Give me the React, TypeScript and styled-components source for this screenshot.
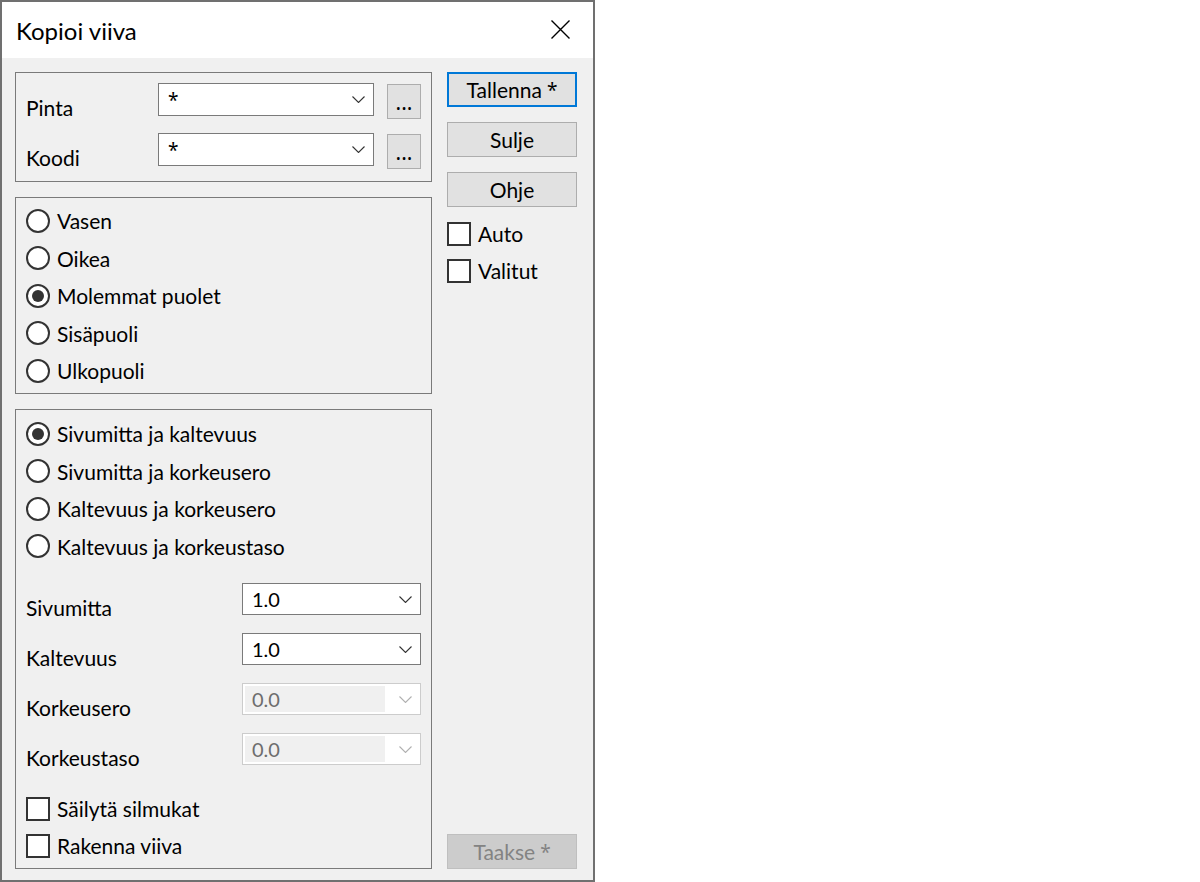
import React from "react";
import styled, { createGlobalStyle } from "styled-components";

const GlobalStyle = createGlobalStyle`
  html, body {
    margin: 0;
    padding: 0;
    background: #ffffff;
  }
  body {
    font-family: Lato, "Noto Sans", "Liberation Sans", sans-serif;
    color: #000000;
  }
  * {
    box-sizing: border-box;
  }
`;

const Window = styled.div`
  width: 595px;
  height: 882px;
  border: 2px solid #707070;
  display: flex;
  flex-direction: column;
  background: #f0f0f0;
`;

const TitleBar = styled.div`
  height: 56px;
  flex: 0 0 56px;
  background: #ffffff;
  display: flex;
  align-items: center;
  justify-content: space-between;
  padding: 0 23px 0 14px;
  font-size: 24px;
`;

const CloseButton = styled.div`
  display: flex;
  margin-top: -2px;
`;

const Body = styled.div`
  flex: 1;
  display: flex;
  gap: 15px;
  padding: 14px 16px 11px 13px;
`;

const LeftColumn = styled.div`
  width: 417px;
  display: flex;
  flex-direction: column;
  gap: 15px;
`;

const RightColumn = styled.div`
  width: 130px;
  display: flex;
  flex-direction: column;
`;

const GroupBox = styled.div<{ $height?: number }>`
  border: 1px solid #7a7a7a;
  ${(p) => (p.$height ? `height: ${p.$height}px;` : "flex: 1;")}
`;

const SourceGrid = styled.div`
  display: grid;
  grid-template-columns: 132px 216px 47px;
  grid-auto-rows: 33px;
  row-gap: 17px;
  padding: 10px 10px 0 10px;
`;

const SideList = styled.div`
  padding: 4px 10px 0 10px;
`;

const ModeGroup = styled.div`
  height: 100%;
  display: flex;
  flex-direction: column;
  padding: 5px 10px 4px 10px;
`;

const FieldGrid = styled.div`
  display: grid;
  grid-template-columns: 216px 179px;
  grid-auto-rows: 32px;
  row-gap: 18px;
  margin-top: 18px;
`;

const CheckList = styled.div`
  margin-top: auto;
`;

const Label = styled.div`
  font-size: 21px;
  line-height: 24px;
  padding-top: 13px;
  white-space: nowrap;
`;

const Combo = styled.div<{ $disabled?: boolean }>`
  height: 33px;
  border: 1px solid ${(p) => (p.$disabled ? "#cccccc" : "#7a7a7a")};
  background: #ffffff;
  display: flex;
  align-items: center;
  padding: 2px 8px 2px 2px;
`;

const SmallCombo = styled(Combo)`
  height: 32px;
`;

const ComboText = styled.div<{ $disabled?: boolean }>`
  flex: 1;
  height: 100%;
  margin-right: 14px;
  padding-left: 7px;
  font-size: 20px;
  line-height: 27px;
  background: ${(p) => (p.$disabled ? "#f0f0f0" : "transparent")};
  color: ${(p) => (p.$disabled ? "#6d6d6d" : "#000000")};
`;

const Star = styled.span`
  font-family: "Noto Sans", sans-serif;
  font-size: 19px;
`;

const BrowseButton = styled.div`
  height: 35px;
  margin-top: 1px;
  margin-left: 13px;
  padding-top: 2px;
  background: #e1e1e1;
  border: 1px solid #adadad;
  display: flex;
  justify-content: center;
  font-family: "Noto Sans", sans-serif;
  font-size: 21px;
  line-height: 30px;
`;

const RadioRow = styled.div`
  height: 37.5px;
  display: flex;
  align-items: center;
  gap: 7px;
  font-size: 21px;
  white-space: nowrap;
`;

const RadioCircle = styled.span<{ $checked?: boolean }>`
  width: 24px;
  height: 24px;
  flex: 0 0 24px;
  border: 2px solid #333333;
  border-radius: 50%;
  background: #ffffff;
  display: flex;
  align-items: center;
  justify-content: center;

  &::after {
    content: "";
    width: 12px;
    height: 12px;
    border-radius: 50%;
    background: ${(p) => (p.$checked ? "#333333" : "transparent")};
  }
`;

const CheckRow = styled.div`
  height: 37px;
  display: flex;
  align-items: center;
  gap: 7px;
  font-size: 21px;
  white-space: nowrap;
`;

const CheckBox = styled.span`
  width: 24px;
  height: 24px;
  flex: 0 0 24px;
  border: 2px solid #333333;
  background: #ffffff;
`;

const ButtonStack = styled.div`
  display: flex;
  flex-direction: column;
  gap: 15px;
`;

const SideChecks = styled.div`
  margin-top: 8px;
`;

const Button = styled.div<{ $variant?: "default" | "normal" | "disabled" }>`
  height: 35px;
  display: flex;
  align-items: center;
  justify-content: center;
  gap: 5px;
  font-size: 21px;
  background: ${(p) => (p.$variant === "disabled" ? "#cccccc" : "#e1e1e1")};
  color: ${(p) => (p.$variant === "disabled" ? "#838383" : "#000000")};
  border: ${(p) =>
    p.$variant === "default"
      ? "2px solid #0078d7"
      : p.$variant === "disabled"
      ? "1px solid #bfbfbf"
      : "1px solid #adadad"};
`;

const BottomButton = styled(Button)`
  margin-top: auto;
`;

const Chevron = ({ disabled }: { disabled?: boolean }) => (
  <svg width="13" height="7" viewBox="0 0 13 7">
    <polyline
      points="0.5,0.5 6.5,6.5 12.5,0.5"
      fill="none"
      stroke={disabled ? "#b0b0b0" : "#333333"}
      strokeWidth="1.1"
    />
  </svg>
);

const sides = ["Vasen", "Oikea", "Molemmat puolet", "Sisäpuoli", "Ulkopuoli"];
const modes = [
  "Sivumitta ja kaltevuus",
  "Sivumitta ja korkeusero",
  "Kaltevuus ja korkeusero",
  "Kaltevuus ja korkeustaso",
];
const fields = [
  { label: "Sivumitta", value: "1.0", disabled: false },
  { label: "Kaltevuus", value: "1.0", disabled: false },
  { label: "Korkeusero", value: "0.0", disabled: true },
  { label: "Korkeustaso", value: "0.0", disabled: true },
];

const App: React.FC = () => {
  return (
    <>
      <GlobalStyle />
      <Window>
        <TitleBar>
          <span>Kopioi viiva</span>
          <CloseButton>
            <svg width="19" height="19" viewBox="0 0 19 19">
              <path d="M0.5 0.5 L18.5 18.5 M18.5 0.5 L0.5 18.5" stroke="#000" strokeWidth="1.4" />
            </svg>
          </CloseButton>
        </TitleBar>
        <Body>
          <LeftColumn>
            <GroupBox $height={110}>
              <SourceGrid>
                {["Pinta", "Koodi"].map((name) => (
                  <React.Fragment key={name}>
                    <Label>{name}</Label>
                    <Combo>
                      <ComboText>
                        <Star>*</Star>
                      </ComboText>
                      <Chevron />
                    </Combo>
                    <BrowseButton>...</BrowseButton>
                  </React.Fragment>
                ))}
              </SourceGrid>
            </GroupBox>
            <GroupBox $height={197}>
              <SideList>
                {sides.map((side, i) => (
                  <RadioRow key={side}>
                    <RadioCircle $checked={i === 2} />
                    {side}
                  </RadioRow>
                ))}
              </SideList>
            </GroupBox>
            <GroupBox>
              <ModeGroup>
                {modes.map((mode, i) => (
                  <RadioRow key={mode}>
                    <RadioCircle $checked={i === 0} />
                    {mode}
                  </RadioRow>
                ))}
                <FieldGrid>
                  {fields.map((f) => (
                    <React.Fragment key={f.label}>
                      <Label>{f.label}</Label>
                      <SmallCombo $disabled={f.disabled}>
                        <ComboText $disabled={f.disabled}>{f.value}</ComboText>
                        <Chevron disabled={f.disabled} />
                      </SmallCombo>
                    </React.Fragment>
                  ))}
                </FieldGrid>
                <CheckList>
                  <CheckRow>
                    <CheckBox />
                    Säilytä silmukat
                  </CheckRow>
                  <CheckRow>
                    <CheckBox />
                    Rakenna viiva
                  </CheckRow>
                </CheckList>
              </ModeGroup>
            </GroupBox>
          </LeftColumn>
          <RightColumn>
            <ButtonStack>
              <Button $variant="default">
                Tallenna <Star>*</Star>
              </Button>
              <Button>Sulje</Button>
              <Button>Ohje</Button>
            </ButtonStack>
            <SideChecks>
              <CheckRow>
                <CheckBox />
                Auto
              </CheckRow>
              <CheckRow>
                <CheckBox />
                Valitut
              </CheckRow>
            </SideChecks>
            <BottomButton $variant="disabled">
              Taakse <Star>*</Star>
            </BottomButton>
          </RightColumn>
        </Body>
      </Window>
    </>
  );
};

export default App;
